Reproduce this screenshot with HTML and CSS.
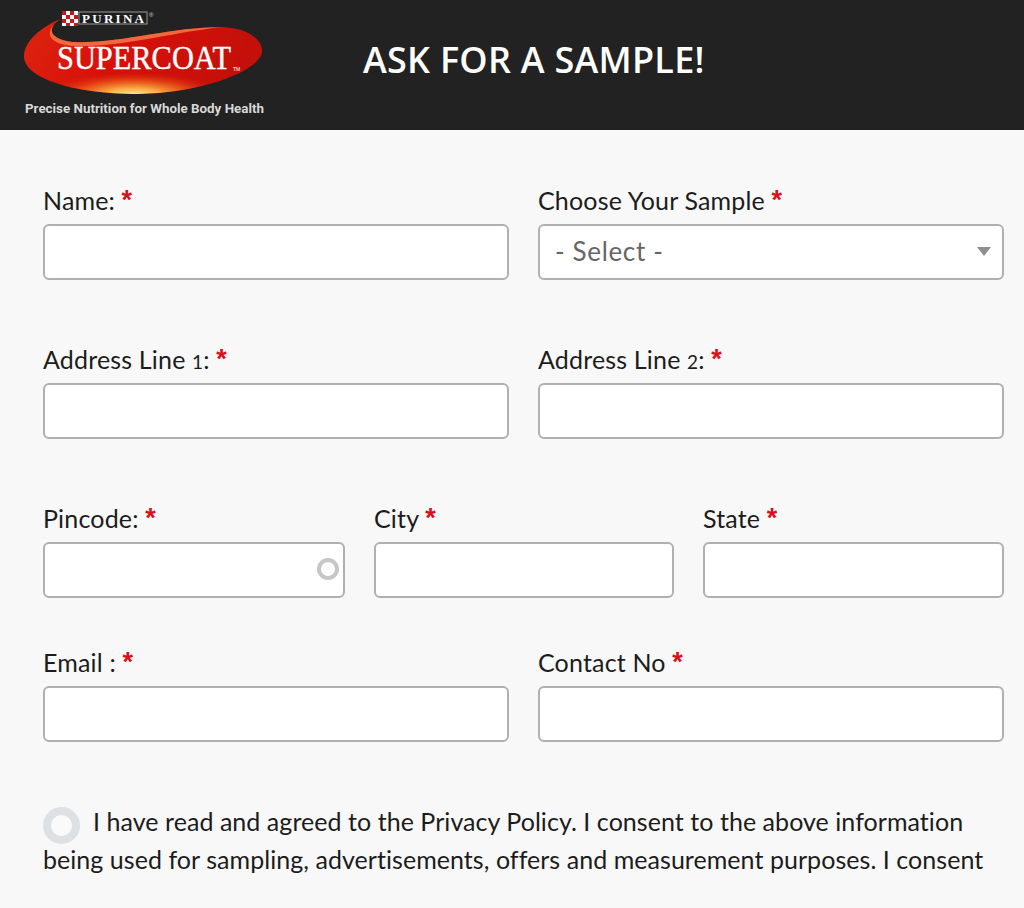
FILE: index.html
```html
<!DOCTYPE html>
<html lang="en">
<head>
<meta charset="utf-8">
<title>Ask for a sample</title>
<link rel="stylesheet" href="styles.css">
</head>
<body>
<header class="top">
  <svg class="logo" width="300" height="130" viewBox="0 0 300 130">
    <defs>
      <linearGradient id="red" x1="0" y1="0" x2="1" y2="0.2">
        <stop offset="0" stop-color="#dc260e"/>
        <stop offset="0.45" stop-color="#d8100a"/>
        <stop offset="1" stop-color="#c4100a"/>
      </linearGradient>
      <radialGradient id="glow" cx="0.5" cy="0.5" r="0.5">
        <stop offset="0" stop-color="#fff0cf"/>
        <stop offset="0.3" stop-color="#fbb347"/>
        <stop offset="0.62" stop-color="#ea5a18" stop-opacity="0.85"/>
        <stop offset="1" stop-color="#d8200f" stop-opacity="0"/>
      </radialGradient>
      <clipPath id="oval">
        <path d="M60 19 C46 29 50 39 72 42 C120 44 170 27 222 27 C248 28 263 40 262 52 C260 70 205 93 138 94 C70 94 22 77 24 55 C25 41 40 28 60 19Z"/>
      </clipPath>
    </defs>
    <path d="M60 19 C46 29 50 39 72 42 C120 44 170 27 222 27 C248 28 263 40 262 52 C260 70 205 93 138 94 C70 94 22 77 24 55 C25 41 40 28 60 19Z" fill="url(#red)"/>
    <g clip-path="url(#oval)">
      <ellipse cx="133" cy="96" rx="92" ry="24" fill="url(#glow)"/>
    </g>
    <path d="M60 19 C46 29 50 39 72 42 C120 44 170 27 222 27 C180 31 120 48 72 46 C46 43 44 31 60 19Z" fill="#ee6a3c"/>
    <rect x="62" y="11" width="16" height="15" fill="#f4f4f4"/>
    <path d="M62 11h4v4h-4zM70 11h4v4h-4zM66 15h4v4h-4zM74 15h4v4h-4zM62 19h4v4h-4zM70 19h4v4h-4zM66 23h4v3h-4zM74 23h4v3h-4z" fill="#c8141c"/>
    <rect x="79" y="12" width="68" height="12" fill="#1d1d1d" stroke="#9a9a9a"/>
    <text x="82" y="23" class="purina" textLength="62">PURINA</text>
    <text x="149" y="17" class="reg">®</text>
    <text transform="translate(57 69) scale(0.87 1)" class="brand" textLength="200" lengthAdjust="spacingAndGlyphs">SUPERCOAT</text>
    <text x="233" y="71" class="tm">TM</text>
    <text x="25" y="113" class="tag" textLength="239" lengthAdjust="spacingAndGlyphs">Precise Nutrition for Whole Body Health</text>
  </svg>
  <h1 class="title">ASK FOR A SAMPLE!</h1>
</header>
<main class="form">
  <div class="row row-two">
    <div class="field"><label class="label">Name: <span class="req">*</span></label><div class="input"></div></div>
    <div class="field"><label class="label">Choose Your Sample <span class="req">*</span></label>
      <div class="input select">- Select -<span class="caret"></span></div></div>
  </div>
  <div class="row row-two">
    <div class="field"><label class="label">Address Line <span class="num">1</span>: <span class="req">*</span></label><div class="input"></div></div>
    <div class="field"><label class="label">Address Line <span class="num">2</span>: <span class="req">*</span></label><div class="input"></div></div>
  </div>
  <div class="row row-three">
    <div class="field"><label class="label">Pincode: <span class="req">*</span></label><div class="input pin"><span class="spin"></span></div></div>
    <div class="field"><label class="label">City <span class="req">*</span></label><div class="input"></div></div>
    <div class="field"><label class="label">State <span class="req">*</span></label><div class="input"></div></div>
  </div>
  <div class="row row-two row-last">
    <div class="field"><label class="label">Email : <span class="req">*</span></label><div class="input"></div></div>
    <div class="field"><label class="label">Contact No <span class="req">*</span></label><div class="input"></div></div>
  </div>
  <p class="consent"><span class="radio"></span>I have read and agreed to the Privacy Policy. I consent to the above information being used for sampling, advertisements, offers and measurement purposes. I consent</p>
</main>
</body>
</html>
```
FILE: styles.css
```css
* { box-sizing: border-box; }
html, body { margin: 0; padding: 0; height: 908px; overflow: hidden; }
body { background: #f8f8f8; font-family: "Lato", "Open Sans", sans-serif; color: #1c1c1c; }
.top { height: 130px; background: #222222; display: flex; align-items: center; }
.logo { display: block; flex: none; }
.purina { font: 700 13px "Liberation Serif", serif; fill: #fff; }
.reg { font: 6px "Liberation Sans", sans-serif; fill: #ddd; }
.brand { font: 400 34px "Liberation Serif", serif; fill: #fff; stroke: #fff; stroke-width: 0.4px; }
.tm { font: 5px "Liberation Sans", sans-serif; fill: #fff; }
.tag { font: 700 12.5px "Roboto", sans-serif; fill: #d8d8d8; }
.title { margin: 0 0 12px 63px; font: 600 36px "Open Sans", sans-serif; color: #fff; letter-spacing: 0.25px; white-space: nowrap; }
.form { padding: 53px 20px 0 43px; }
.row { display: grid; column-gap: 29px; height: 159px; }
.row-two { grid-template-columns: 466px 466px; }
.row-three { grid-template-columns: 302px 300px 301px; height: 144px; }
.row-last { height: 157px; }
.label { display: block; height: 41px; font-size: 25px; line-height: 34px; white-space: nowrap; letter-spacing: 0.17px; }
.num { font-size: 19px; }
.req { color: #d9101c; font: 700 27px/20px "Liberation Sans", sans-serif; vertical-align: 1px; }
.input { height: 56px; background: #fff; border: 2px solid #b0b0b0; border-radius: 6px; position: relative; }
.select { font-size: 26px; line-height: 50px; color: #666; padding-left: 15px; letter-spacing: 0.65px; }
.caret { position: absolute; right: 11px; top: 21px; border-left: 7.5px solid transparent; border-right: 7.5px solid transparent; border-top: 9px solid #8f8f8f; }
.spin { position: absolute; right: 4px; top: 14px; width: 22px; height: 22px; border: 4.5px solid #c6c6c6; border-radius: 50%; }
.consent { margin: 0; font-size: 25px; line-height: 38px; letter-spacing: 0.05px; width: 965px; }
.radio { display: inline-block; width: 37px; height: 37px; margin: -10px 13px -13px 0; border: 8px solid #dde1e4; border-radius: 50%; background: #fafafa; }
```
